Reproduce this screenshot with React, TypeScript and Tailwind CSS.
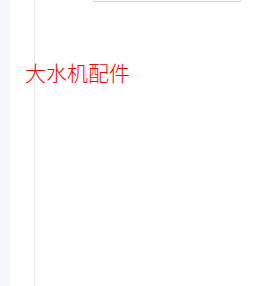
export default function App() {
  return (
    <div className="flex h-[286px] w-[262px] bg-white overflow-hidden">
      <div className="w-[10px] h-full bg-[#f5f7fa] shrink-0" />
      <div className="relative flex-1 h-full">
        <div className="absolute left-[24px] top-0 bottom-0 w-px bg-[#e4e7ed]" />
        <div className="ml-[83px] w-[148px] h-[2px] border-x border-b border-[#d2d5db] rounded-b-[4px]" />
        <div
          className="relative mt-[56px] ml-[15px] text-[21px] leading-[28px] font-light text-[#ff0000]"
          style={{ fontFamily: '"Noto Sans CJK SC", sans-serif' }}
        >
          大水机配件
        </div>
      </div>
    </div>
  );
}
